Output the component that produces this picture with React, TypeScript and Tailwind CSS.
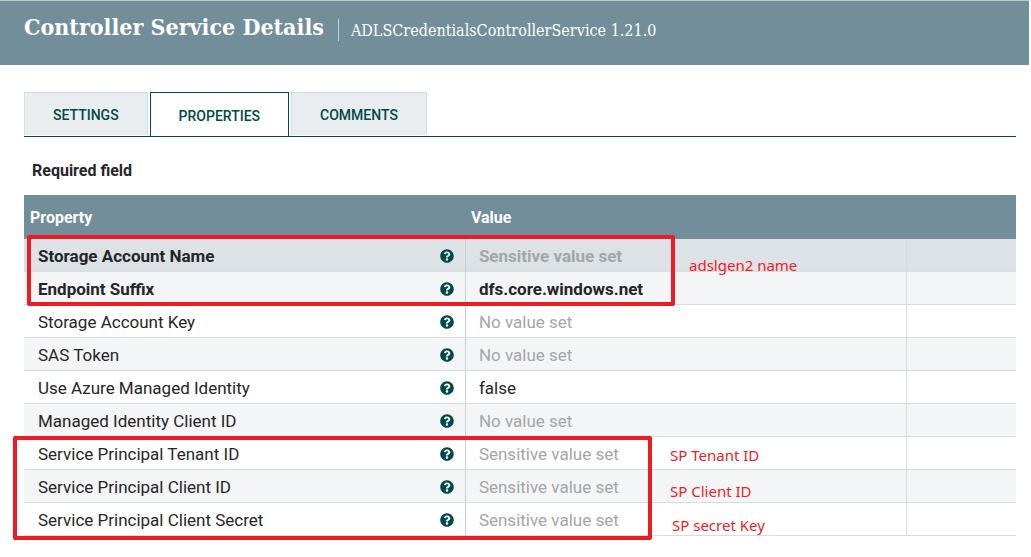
import { FaQuestionCircle } from "react-icons/fa";

type Row = { name: string; value: string; set?: boolean; required?: boolean; selected?: boolean };

const rows: Row[] = [
  { name: "Storage Account Name", value: "Sensitive value set", required: true, selected: true },
  { name: "Endpoint Suffix", value: "dfs.core.windows.net", set: true, required: true },
  { name: "Storage Account Key", value: "No value set" },
  { name: "SAS Token", value: "No value set" },
  { name: "Use Azure Managed Identity", value: "false", set: true },
  { name: "Managed Identity Client ID", value: "No value set" },
  { name: "Service Principal Tenant ID", value: "Sensitive value set" },
  { name: "Service Principal Client ID", value: "Sensitive value set" },
  { name: "Service Principal Client Secret", value: "Sensitive value set" },
];

function Tab({ label, active = false }: { label: string; active?: boolean }) {
  return (
    <button
      type="button"
      role="tab"
      aria-selected={active}
      className={
        "px-7 pt-0.5 text-sm font-medium text-[#004849] border border-b-0 " +
        (active ? "h-11 border-[#004849] bg-white" : "h-[43px] border-[#d0dfe1] bg-[#e9edf0]")
      }
    >
      {label}
    </button>
  );
}

function PropertyRow({ row, index }: { row: Row; index: number }) {
  const background = row.selected ? "bg-[#dde2e6]" : index % 2 ? "bg-[#f4f5f7]" : "bg-white";
  return (
    <tr className={"h-[33px] " + background + (row.required ? " font-bold" : "")}>
      <td className="border-b border-[#d6dde0] pl-3.5 pr-[11px] pt-0.5">
        <div className="flex items-center justify-between">
          <span>{row.name}</span>
          <button type="button" aria-label={"About " + row.name} className="text-[#004849]">
            <FaQuestionCircle size={14} />
          </button>
        </div>
      </td>
      <td
        className={
          "border-b border-l border-b-[#d6dde0] border-l-[#c7d0d4] pt-0.5 pl-[13px] " +
          (row.set ? "" : "text-[#a5a5a5]")
        }
      >
        {row.value}
      </td>
      <td className="border-b border-l border-[#d6dde0]" />
    </tr>
  );
}

const noteClass = "absolute text-[15px] leading-5 text-[#ed1c24] whitespace-nowrap font-['Noto_Sans',sans-serif]";

export default function App() {
  return (
    <div className="bg-white pr-0.5 font-[Roboto,sans-serif] text-[#262626]">
      <header className="flex h-[65px] items-start border-t border-[#c4c8c8] bg-[#728e9b] pl-6 pt-2.5 font-['Roboto_Slab','DejaVu_Serif_Condensed','DejaVu_Serif',serif] text-white">
        <h1 className="text-[23px] leading-8 font-bold whitespace-nowrap">Controller Service Details</h1>
        <span className="mt-2 ml-3.5 h-[22px] border-l border-[#c7d2d7]" />
        <span className="ml-3 pt-1 text-base leading-8 whitespace-nowrap">ADLSCredentialsControllerService 1.21.0</span>
      </header>
      <main className="pt-[27px] pr-[13px] pb-5 pl-6">
        <div role="tablist" className="flex h-[45px] items-start gap-0.5 border-b border-[#004849]">
          <Tab label="SETTINGS" />
          <Tab label="PROPERTIES" active />
          <Tab label="COMMENTS" />
        </div>
        <p className="px-2 pt-[22px] pb-3 text-base leading-6 font-bold">Required field</p>
        <div className="relative">
          <table className="w-full table-fixed border-separate border-spacing-0 text-[17px] leading-5">
            <thead>
              <tr className="h-11 bg-[#728e9b] text-left text-base font-bold text-white">
                <th scope="col" className="w-4/9 pt-0.5 pl-1.5">Property</th>
                <th scope="col" className="w-4/9 pt-0.5 pl-1.5">Value</th>
                <th scope="col" aria-label="Actions" className="w-1/9" />
              </tr>
            </thead>
            <tbody>
              {rows.map((row, i) => (
                <PropertyRow key={row.name} row={row} index={i} />
              ))}
            </tbody>
          </table>
          <div className="pointer-events-none absolute top-10 left-[3px] h-[71px] w-[648px] rounded-xs border-4 border-[#ed1c24]" />
          <div className="pointer-events-none absolute top-[241px] -left-[11px] h-[104px] w-[639px] rounded-xs border-4 border-[#ed1c24]" />
          <span className={noteClass + " top-[60px] left-[665px]"}>adslgen2 name</span>
          <span className={noteClass + " top-[250px] left-[646px]"}>SP Tenant ID</span>
          <span className={noteClass + " top-[286px] left-[646px]"}>SP Client ID</span>
          <span className={noteClass + " top-[320px] left-[648px]"}>SP secret Key</span>
        </div>
      </main>
    </div>
  );
}
